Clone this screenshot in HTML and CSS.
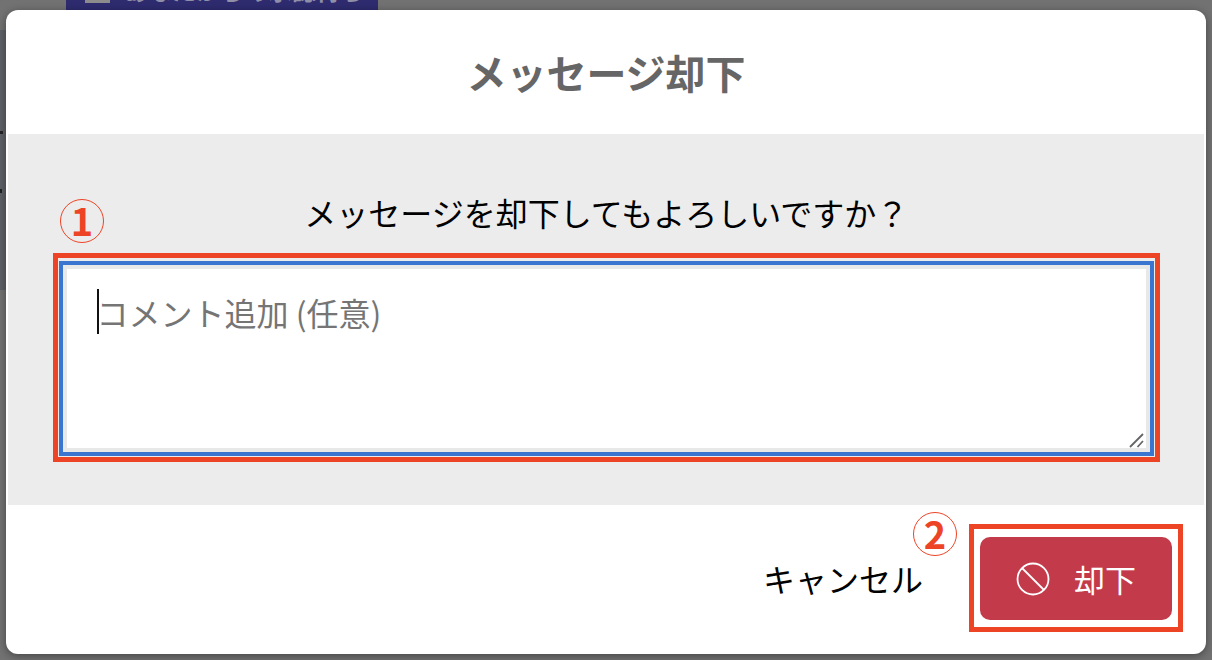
FILE: index.html
```html
<!DOCTYPE html>
<html lang="ja">
<head>
    <title>メッセージ却下</title>
    <link rel="stylesheet" href="styles.css">
</head>
<body>
    <div class="behind">
        <div class="behind-button">
            <span class="behind-icon"></span>
            <span class="behind-label">あなたからの承認待ち</span>
        </div>
    </div>

    <div class="dialog">
        <h1 class="dialog-title">メッセージ却下</h1>

        <div class="dialog-body">
            <span class="step step-one">1</span>
            <p class="question">メッセージを却下してもよろしいですか？</p>
            <div class="mark mark-input">
                <div class="textarea-container">
                    <textarea class="comment" placeholder="コメント追加 (任意)"></textarea>
                    <span class="caret"></span>
                    <svg class="grip" width="16" height="16" viewBox="0 0 16 16">
                        <path d="M1 15 L14 2 M8.500 15 L14 9" stroke="#666" stroke-width="1.800" fill="none"/>
                    </svg>
                </div>
            </div>
        </div>

        <div class="dialog-footer">
            <span class="cancel">キャンセル</span>
            <div class="mark mark-button">
                <span class="step step-two">2</span>
                <button class="reject">
                    <svg width="34" height="34" viewBox="0 0 34 34">
                        <circle cx="17" cy="17" r="15.500" stroke="#fff" stroke-width="1.800" fill="none"/>
                        <path d="M6 6 L28 28" stroke="#fff" stroke-width="1.800"/>
                    </svg>
                    <span>却下</span>
                </button>
            </div>
        </div>
    </div>
</body>
</html>
```

FILE: styles.css
```css
html, body {
    height: 100%;
}

body {
    margin: 0;
    overflow: hidden;
    background:
        linear-gradient(#222, #222) no-repeat 0 131px / 3px 3px,
        linear-gradient(#222, #222) no-repeat 0 189px / 2px 4px,
        linear-gradient(#5e6268, #5e6268) no-repeat 0 30px / 6px 260px,
        #727272;
    font-family: "Noto Sans CJK JP", "Noto Sans", sans-serif;
    color: #000;
}

/* Page behind the modal, only the bottom of a button shows */
.behind {
    height: 10px;
    padding-left: 66px;
    overflow: hidden;
}

.behind-button {
    width: 312px;
    height: 10px;
    padding-left: 19px;
    box-sizing: border-box;
    display: flex;
    gap: 14px;
    background: #2e2b6f;
    overflow: hidden;
}

.behind-icon {
    width: 25px;
    height: 3px;
    background: #8c8c8c;
}

.behind-label {
    display: block;
    margin-top: -24px;
    height: 28px;
    color: #8f8fa8;
    font-size: 24px;
    font-weight: 700;
    line-height: 28px;
    white-space: nowrap;
}

.dialog {
    width: 1200px;
    height: 644px;
    margin-left: 6px;
    box-sizing: border-box;
    display: flex;
    flex-direction: column;
    background: #fff;
    border-radius: 12px;
    box-shadow: 0 2px 8px rgba(0, 0, 0, 0.4);
}

.dialog-title {
    margin: 0;
    height: 124px;
    line-height: 124px;
    font-size: 40px;
    font-weight: 700;
    text-align: center;
    color: #666;
}

.dialog-body {
    position: relative;
    height: 371px;
    margin: 0 2px;
    padding: 58px 44px 0 44.500px;
    box-sizing: border-box;
    background: #ececec;
}

.question {
    margin: 0 0 21px;
    height: 40px;
    line-height: 40px;
    font-size: 32px;
    text-align: center;
}

/* Red frames from the annotated screenshot */
.mark {
    border: 5px solid #ee4426;
    box-sizing: border-box;
}

.mark-input {
    height: 209px;
    padding: 3px 1px 1px;
}

.mark-button {
    position: relative;
    width: 214px;
    height: 108px;
    padding: 8px 6px;
    background: #fff;
}

/* Numbered circles */
.step {
    position: absolute;
    width: 44px;
    height: 44px;
    box-sizing: border-box;
    border: 1.500px solid #ee4426;
    border-radius: 50%;
    color: #ee4426;
    font-size: 38px;
    font-weight: 700;
    line-height: 40px;
    text-align: center;
}

.step-one {
    left: 52px;
    top: 65px;
}

.step-two {
    left: -61px;
    top: -17px;
}

.textarea-container {
    position: relative;
    height: 100%;
}

.comment {
    display: block;
    width: 100%;
    height: 100%;
    box-sizing: border-box;
    padding: 25px 34px;
    border: 4px solid #3a75cf;
    outline: 4px solid #e8e8e8;
    outline-offset: -8px;
    background: #fff;
    font-family: inherit;
    font-size: 32px;
    line-height: 44px;
    resize: none;
}

.comment::placeholder {
    color: #757575;
    opacity: 1;
}

.caret {
    position: absolute;
    left: 38px;
    top: 28px;
    width: 2px;
    height: 45px;
    background: #111;
}

.grip {
    position: absolute;
    right: 9px;
    bottom: 8px;
}

.dialog-footer {
    flex: 1;
    display: flex;
    justify-content: flex-end;
    align-items: flex-start;
    gap: 46px;
    padding: 19px 23px 0 0;
}

.cancel {
    margin-top: 32px;
    font-size: 32px;
    line-height: 44px;
}

.reject {
    width: 192px;
    height: 83px;
    display: flex;
    align-items: center;
    justify-content: center;
    gap: 24px;
    border: none;
    border-radius: 10px;
    background: #c33a4b;
    color: #fff;
    font-family: inherit;
    font-size: 31px;
}
```
